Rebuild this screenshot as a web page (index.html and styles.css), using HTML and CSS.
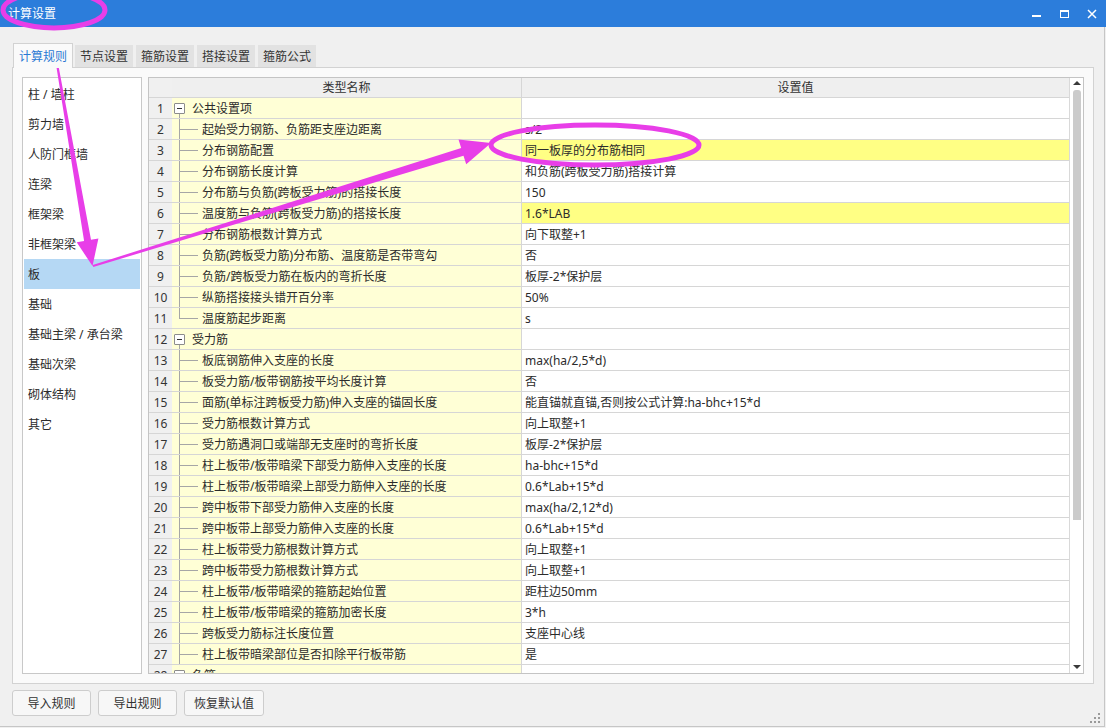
FILE: index.html
```html
<!DOCTYPE html>
<html lang="zh">
<head>
<meta charset="utf-8">
<title>计算设置</title>
<link rel="stylesheet" href="styles.css">
</head>
<body>
<div class="window">
  <div class="titlebar">
    <span class="title">计算设置</span>
    <div class="controls">
      <span class="ctl"><svg width="28" height="27" viewBox="0 0 28 27"><rect x="10" y="15" width="9" height="2" fill="#fff"/></svg></span>
      <span class="ctl"><svg width="28" height="27" viewBox="0 0 28 27"><rect x="10.5" y="10.5" width="8" height="7" fill="none" stroke="#fff" stroke-width="1"/><rect x="10" y="10" width="9" height="2" fill="#fff"/></svg></span>
      <span class="ctl"><svg width="28" height="27" viewBox="0 0 28 27"><path d="M10 10 L18 18 M18 10 L10 18" stroke="#fff" stroke-width="1.5" fill="none"/></svg></span>
    </div>
  </div>
  <div class="content">
    <div class="tabs">
      <div class="tab active">计算规则</div>
      <div class="tab">节点设置</div>
      <div class="tab">箍筋设置</div>
      <div class="tab">搭接设置</div>
      <div class="tab">箍筋公式</div>
    </div>
    <div class="panel">
      <ul class="side">
        <li>柱 / 墙柱</li>
        <li>剪力墙</li>
        <li>人防门框墙</li>
        <li>连梁</li>
        <li>框架梁</li>
        <li>非框架梁</li>
        <li class="sel">板</li>
        <li>基础</li>
        <li>基础主梁 / 承台梁</li>
        <li>基础次梁</li>
        <li>砌体结构</li>
        <li>其它</li>
      </ul>
      <div class="grid">
        <div class="grid-main">
          <div class="hdr"><div class="num"></div><div class="hname">类型名称</div><div class="hval">设置值</div></div>
          <div class="row"><div class="num">1</div><div class="name"><span class="gtwig"><span class="box"></span></span>公共设置项</div><div class="val"></div></div>
          <div class="row"><div class="num">2</div><div class="name"><span class="twig"></span>起始受力钢筋、负筋距支座边距离</div><div class="val">s/2</div></div>
          <div class="row"><div class="num">3</div><div class="name"><span class="twig"></span>分布钢筋配置</div><div class="val hl">同一板厚的分布筋相同</div></div>
          <div class="row"><div class="num">4</div><div class="name"><span class="twig"></span>分布钢筋长度计算</div><div class="val">和负筋(跨板受力筋)搭接计算</div></div>
          <div class="row"><div class="num">5</div><div class="name"><span class="twig"></span>分布筋与负筋(跨板受力筋)的搭接长度</div><div class="val">150</div></div>
          <div class="row"><div class="num">6</div><div class="name"><span class="twig"></span>温度筋与负筋(跨板受力筋)的搭接长度</div><div class="val hl">1.6*LAB</div></div>
          <div class="row"><div class="num">7</div><div class="name"><span class="twig"></span>分布钢筋根数计算方式</div><div class="val">向下取整+1</div></div>
          <div class="row"><div class="num">8</div><div class="name"><span class="twig"></span>负筋(跨板受力筋)分布筋、温度筋是否带弯勾</div><div class="val">否</div></div>
          <div class="row"><div class="num">9</div><div class="name"><span class="twig"></span>负筋/跨板受力筋在板内的弯折长度</div><div class="val">板厚-2*保护层</div></div>
          <div class="row"><div class="num">10</div><div class="name"><span class="twig"></span>纵筋搭接接头错开百分率</div><div class="val">50%</div></div>
          <div class="row"><div class="num">11</div><div class="name"><span class="twig last"></span>温度筋起步距离</div><div class="val">s</div></div>
          <div class="row"><div class="num">12</div><div class="name"><span class="gtwig"><span class="box"></span></span>受力筋</div><div class="val"></div></div>
          <div class="row"><div class="num">13</div><div class="name"><span class="twig"></span>板底钢筋伸入支座的长度</div><div class="val">max(ha/2,5*d)</div></div>
          <div class="row"><div class="num">14</div><div class="name"><span class="twig"></span>板受力筋/板带钢筋按平均长度计算</div><div class="val">否</div></div>
          <div class="row"><div class="num">15</div><div class="name"><span class="twig"></span>面筋(单标注跨板受力筋)伸入支座的锚固长度</div><div class="val">能直锚就直锚,否则按公式计算:ha-bhc+15*d</div></div>
          <div class="row"><div class="num">16</div><div class="name"><span class="twig"></span>受力筋根数计算方式</div><div class="val">向上取整+1</div></div>
          <div class="row"><div class="num">17</div><div class="name"><span class="twig"></span>受力筋遇洞口或端部无支座时的弯折长度</div><div class="val">板厚-2*保护层</div></div>
          <div class="row"><div class="num">18</div><div class="name"><span class="twig"></span>柱上板带/板带暗梁下部受力筋伸入支座的长度</div><div class="val">ha-bhc+15*d</div></div>
          <div class="row"><div class="num">19</div><div class="name"><span class="twig"></span>柱上板带/板带暗梁上部受力筋伸入支座的长度</div><div class="val">0.6*Lab+15*d</div></div>
          <div class="row"><div class="num">20</div><div class="name"><span class="twig"></span>跨中板带下部受力筋伸入支座的长度</div><div class="val">max(ha/2,12*d)</div></div>
          <div class="row"><div class="num">21</div><div class="name"><span class="twig"></span>跨中板带上部受力筋伸入支座的长度</div><div class="val">0.6*Lab+15*d</div></div>
          <div class="row"><div class="num">22</div><div class="name"><span class="twig"></span>柱上板带受力筋根数计算方式</div><div class="val">向上取整+1</div></div>
          <div class="row"><div class="num">23</div><div class="name"><span class="twig"></span>跨中板带受力筋根数计算方式</div><div class="val">向上取整+1</div></div>
          <div class="row"><div class="num">24</div><div class="name"><span class="twig"></span>柱上板带/板带暗梁的箍筋起始位置</div><div class="val">距柱边50mm</div></div>
          <div class="row"><div class="num">25</div><div class="name"><span class="twig"></span>柱上板带/板带暗梁的箍筋加密长度</div><div class="val">3*h</div></div>
          <div class="row"><div class="num">26</div><div class="name"><span class="twig"></span>跨板受力筋标注长度位置</div><div class="val">支座中心线</div></div>
          <div class="row"><div class="num">27</div><div class="name"><span class="twig"></span>柱上板带暗梁部位是否扣除平行板带筋</div><div class="val">是</div></div>
          <div class="row"><div class="num">28</div><div class="name"><span class="gtwig"><span class="box"></span></span>负筋</div><div class="val"></div></div>
        </div>
        <div class="vscroll">
          <span class="arr-up"></span>
          <span class="thumb"></span>
          <span class="arr-down"></span>
        </div>
      </div>
    </div>
    <div class="footer">
      <button class="btn">导入规则</button>
      <button class="btn">导出规则</button>
      <button class="btn wide">恢复默认值</button>
      <svg class="grip" width="12" height="12" viewBox="0 0 12 12">
        <rect x="9" y="1" width="2" height="2" fill="#9a9a9a"/>
        <rect x="5" y="5" width="2" height="2" fill="#9a9a9a"/>
        <rect x="9" y="5" width="2" height="2" fill="#9a9a9a"/>
        <rect x="1" y="9" width="2" height="2" fill="#9a9a9a"/>
        <rect x="5" y="9" width="2" height="2" fill="#9a9a9a"/>
        <rect x="9" y="9" width="2" height="2" fill="#9a9a9a"/>
      </svg>
    </div>
  </div>
  <svg class="annot" width="1106" height="728" viewBox="0 0 1106 728">
    <ellipse cx="54" cy="10" rx="51" ry="18" fill="none" stroke="#e83ee8" stroke-width="5"/>
    <ellipse cx="595" cy="145" rx="104" ry="20" fill="none" stroke="#e83ee8" stroke-width="5"/>
    <polygon fill="#e83ee8" points="55.0,58.1 57.0,57.9 91.0,239.8 98.4,238.5 92.5,266 76.7,242.3 84.1,241.0"/>
    <polygon fill="#e83ee8" points="92.7,265.0 461.2,148.0 458.5,139.4 491,143 466.2,164.3 463.5,155.7 93.3,267.0"/>
  </svg>
</div>
</body>
</html>
```

FILE: styles.css
```css
html, body {
  margin: 0;
  padding: 0;
}
body {
  width: 1106px;
  height: 728px;
  overflow: hidden;
  background: #f0f0f0;
  font-family: "Noto Sans", "Noto Sans CJK SC", sans-serif;
  font-size: 12px;
  color: #2b2b2b;
}
.window {
  position: relative;
  width: 1106px;
  height: 728px;
}
.titlebar {
  height: 27px;
  background: #2c7ddb;
  color: #fff;
  display: flex;
  align-items: center;
  justify-content: space-between;
  padding-left: 8px;
}
.title {
  font-size: 12px;
  line-height: 27px;
}
.controls {
  display: flex;
}
.ctl {
  display: block;
  width: 28px;
  height: 27px;
}
.ctl svg {
  display: block;
}
.content {
  width: 1105px;
  height: 700px;
  box-sizing: border-box;
  padding: 16px 11px 0 12px;
  border-right: 1px solid #c6c6c6;
  border-bottom: 1px solid #c6c6c6;
}
.tabs {
  display: flex;
  align-items: flex-end;
  height: 24px;
  margin-left: 1px;
}
.tab {
  width: 58px;
  height: 22px;
  margin-left: 3px;
  background: #e2e2e2;
  color: #333;
  display: flex;
  align-items: center;
  justify-content: center;
  white-space: nowrap;
}
.tab.active {
  position: relative;
  z-index: 1;
  margin-left: 0;
  margin-right: -1px;
  height: 24px;
  margin-bottom: -1px;
  background: #fafafa;
  border: 1px solid #d2d2d2;
  border-bottom: none;
  color: #2a79d4;
}
.panel {
  display: flex;
  gap: 6px;
  width: 1082px;
  height: 617px;
  box-sizing: border-box;
  padding: 9px;
  border: 1px solid #d2d2d2;
  background: #fafafa;
}
.side {
  list-style: none;
  margin: 0;
  padding: 1px 0 0;
  width: 120px;
  height: 597px;
  box-sizing: border-box;
  border: 1px solid #c8c8c8;
  background: #fff;
}
.side li {
  height: 30px;
  line-height: 32px;
  margin: 0 1px;
  padding-left: 4px;
  white-space: nowrap;
  overflow: hidden;
  color: #2b2b2b;
}
.side li.sel {
  background: #b5d8f4;
}
.grid {
  display: flex;
  width: 936px;
  height: 597px;
  box-sizing: border-box;
  border: 1px solid #c4c4c4;
  background: #fff;
  overflow: hidden;
}
.grid-main {
  width: 920px;
  overflow: hidden;
}
.hdr, .row {
  display: flex;
  box-sizing: border-box;
  border-bottom: 1px solid #d6d6d6;
}
.hdr {
  height: 20px;
  background: #efefef;
  color: #333;
}
.row {
  height: 21px;
}
.num {
  width: 23px;
  flex: none;
  background: #f0f0f0;
  text-align: center;
  line-height: 22px;
  overflow: hidden;
  color: #333;
}
.hname {
  width: 349px;
  flex: none;
  text-align: center;
  line-height: 20px;
  overflow: hidden;
}
.hval {
  flex: 1;
  border-left: 1px solid #d6d6d6;
  text-align: center;
  line-height: 20px;
  overflow: hidden;
}
.name {
  width: 349px;
  flex: none;
  background: #ffffd6;
  display: flex;
  align-items: flex-start;
  white-space: nowrap;
  overflow: hidden;
  line-height: 22px;
}
.val {
  flex: 1;
  border-left: 1px solid #d6d6d6;
  padding-left: 3px;
  line-height: 22px;
  white-space: nowrap;
  overflow: hidden;
}
.val.hl {
  background: #ffff84;
}
.twig {
  display: block;
  flex: none;
  width: 30px;
  height: 20px;
  background:
    linear-gradient(#a6a6a6, #a6a6a6) 7px 0 / 1px 20px no-repeat,
    linear-gradient(#a6a6a6, #a6a6a6) 7px 10px / 19px 1px no-repeat;
}
.twig.last {
  background:
    linear-gradient(#a6a6a6, #a6a6a6) 7px 0 / 1px 11px no-repeat,
    linear-gradient(#a6a6a6, #a6a6a6) 7px 10px / 19px 1px no-repeat;
}
.gtwig {
  display: block;
  flex: none;
  width: 20px;
  height: 20px;
  background: linear-gradient(#a6a6a6, #a6a6a6) 7px 16px / 1px 4px no-repeat;
}
.box {
  display: block;
  width: 11px;
  height: 11px;
  box-sizing: border-box;
  margin: 5px 0 0 2px;
  border: 1px solid #8c8c8c;
  border-radius: 1px;
  background: #fff linear-gradient(#333, #333) center / 5px 1px no-repeat;
}
.vscroll {
  width: 13px;
  flex: none;
  border-left: 1px solid #d9d9d9;
  display: flex;
  flex-direction: column;
  align-items: center;
  background: #fff;
}
.arr-up {
  display: block;
  width: 0;
  height: 0;
  margin-top: 3px;
  border-left: 4px solid transparent;
  border-right: 4px solid transparent;
  border-bottom: 4px solid #3a3a3a;
}
.thumb {
  display: block;
  width: 8px;
  height: 430px;
  margin-top: 5px;
  background: #cbcbcb;
  border-radius: 3px 3px 0 0;
}
.arr-down {
  display: block;
  width: 0;
  height: 0;
  margin-top: auto;
  margin-bottom: 4px;
  border-left: 4px solid transparent;
  border-right: 4px solid transparent;
  border-top: 4px solid #3a3a3a;
}
.footer {
  display: flex;
  gap: 7px;
  height: 36px;
  margin-top: 6px;
}
.btn {
  width: 79px;
  height: 26px;
  box-sizing: border-box;
  border: 1px solid #cdcdcd;
  border-radius: 3px;
  background: #f7f7f7;
  font-family: "Noto Sans", "Noto Sans CJK SC", sans-serif;
  font-size: 12px;
  color: #333;
  padding: 0;
}
.btn.wide {
  width: 80px;
}
.grip {
  display: block;
  margin-left: auto;
  margin-right: -8px;
  align-self: flex-end;
  margin-bottom: 2px;
}
.annot {
  position: absolute;
  left: 0;
  top: 0;
  pointer-events: none;
}
```
